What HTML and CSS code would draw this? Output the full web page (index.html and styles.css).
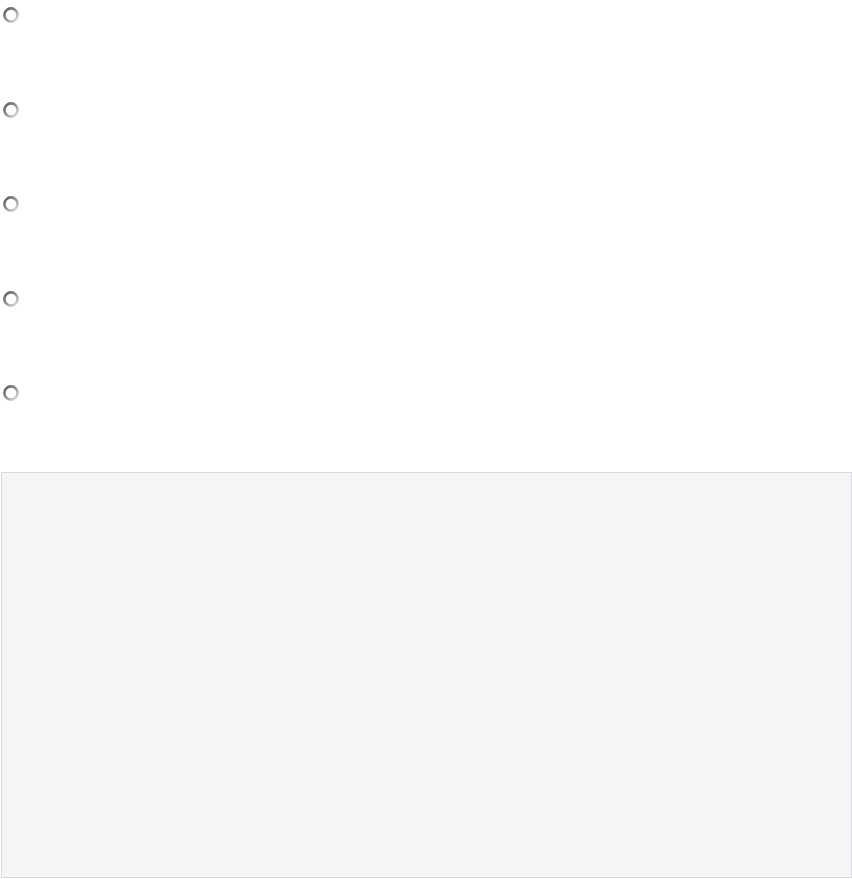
FILE: index.html
```html
<!DOCTYPE html>
<html>
<head>
<meta charset="utf-8">
<link rel="stylesheet" href="styles.css">
</head>
<body>
<div class="options">
  <span class="radio"><svg viewBox="0 0 16 16" width="16" height="16"><defs><linearGradient id="g" x1="0" y1="0" x2="1" y2="1"><stop offset="0" stop-color="#585858"/><stop offset="0.5" stop-color="#939393"/><stop offset="1" stop-color="#e8e8e8"/></linearGradient></defs><circle cx="8" cy="8" r="6.6" fill="#fff" stroke="url(#g)" stroke-width="2.6"/></svg></span>
  <span class="radio"><svg viewBox="0 0 16 16" width="16" height="16"><circle cx="8" cy="8" r="6.6" fill="#fff" stroke="url(#g)" stroke-width="2.6"/></svg></span>
  <span class="radio"><svg viewBox="0 0 16 16" width="16" height="16"><circle cx="8" cy="8" r="6.6" fill="#fff" stroke="url(#g)" stroke-width="2.6"/></svg></span>
  <span class="radio"><svg viewBox="0 0 16 16" width="16" height="16"><circle cx="8" cy="8" r="6.6" fill="#fff" stroke="url(#g)" stroke-width="2.6"/></svg></span>
  <span class="radio"><svg viewBox="0 0 16 16" width="16" height="16"><circle cx="8" cy="8" r="6.6" fill="#fff" stroke="url(#g)" stroke-width="2.6"/></svg></span>
</div>
<div class="panel"></div>
</body>
</html>
```
FILE: styles.css
```css
html, body {
  margin: 0;
  padding: 0;
  background: #ffffff;
  font-family: "Liberation Sans", Arial, sans-serif;
}
.options {
  display: flex;
  flex-direction: column;
  align-items: flex-start;
  gap: 78.5px;
  padding: 7px 0 0 3px;
}
.radio {
  display: block;
  width: 16px;
  height: 16px;
}
.radio svg {
  display: block;
}
.panel {
  margin: 71px 0 0 1px;
  width: 849px;
  height: 404px;
  border: 1px solid #d9d9e3;
  background: #f5f5f5;
}
```
